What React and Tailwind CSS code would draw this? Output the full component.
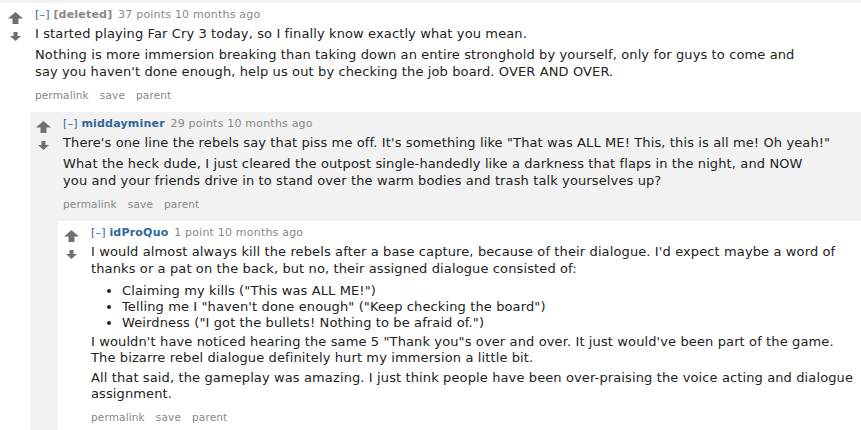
import React from "react";

const font = { fontFamily: '"DejaVu Sans", Verdana, sans-serif' };

function Arrows() {
  return (
    <div className="flex w-[24px] shrink-0 flex-col items-center pt-[9px]">
      <svg width="15" height="12" viewBox="0 0 15 12">
        <polygon points="7.5,0 15,6.5 10.5,6.5 10.5,12 4.5,12 4.5,6.5 0,6.5" fill="#707070" />
      </svg>
      <svg className="mt-[8px]" width="11" height="9" viewBox="0 0 11 9">
        <polygon points="3.5,0 7.5,0 7.5,4 11,4 5.5,9 0,4 3.5,4" fill="#707070" />
      </svg>
    </div>
  );
}

function Tagline({ author, deleted, points }) {
  return (
    <div className="whitespace-nowrap text-[11px] leading-[14px] tracking-[0.2px] text-[#888]">
      <span className="text-[#369]">[–]</span>{" "}
      {deleted ? (
        <span className="font-bold text-[#888]">[deleted]</span>
      ) : (
        <span className="font-bold text-[#369]">{author}</span>
      )}{" "}
      <span className="ml-[2px]">{points} 10 months ago</span>
    </div>
  );
}

function Buttons() {
  return (
    <div className="flex gap-[11px] whitespace-nowrap text-[10.5px] leading-[14px] tracking-[0.15px] text-[#888]">
      <span>permalink</span>
      <span>save</span>
      <span>parent</span>
    </div>
  );
}

function Comment({ author, deleted, points, children, body, bg }) {
  return (
    <div className={bg}>
      <div className="flex pl-[1px]">
        <Arrows />
        <div className="ml-[8px] flex-1 pt-[5px]">
          <Tagline author={author} deleted={deleted} points={points} />
          <div className="mt-[3px] whitespace-nowrap text-[13px] leading-[17px] tracking-[0.12px] text-[#222] [&_p]:mb-[4px] [&_p:last-child]:mb-0">
            {body}
          </div>
          <div className="mt-[8px] mb-[10px]">
            <Buttons />
          </div>
        </div>
      </div>
      {children}
    </div>
  );
}

export default function App() {
  return (
    <div className="min-h-[430px] bg-[#f2f2f2] pt-[3px]" style={font}>
      <div className="min-h-[427px] bg-white pl-[2px]">
        <Comment
          deleted
          points="37 points"
          bg="bg-white"
          body={
            <>
              <p>I started playing Far Cry 3 today, so I finally know exactly what you mean.</p>
              <p>
                Nothing is more immersion breaking than taking down an entire stronghold by yourself, only for guys to come and
                <br />
                say you haven't done enough, help us out by checking the job board. OVER AND OVER.
              </p>
            </>
          }
        >
          <div className="ml-[28px]">
            <Comment
              author="middayminer"
              points="29 points"
              bg="bg-[#f2f2f2]"
              body={
                <>
                  <p>
                    There's one line the rebels say that piss me off. It's something like "That was ALL ME! This, this is all me! Oh yeah!"
                  </p>
                  <p>
                    What the heck dude, I just cleared the outpost single-handedly like a darkness that flaps in the night, and NOW
                    <br />
                    you and your friends drive in to stand over the warm bodies and trash talk yourselves up?
                  </p>
                </>
              }
            >
              <div className="ml-[28px]">
                <Comment
                  author="idProQuo"
                  points="1 point"
                  bg="bg-white"
                  body={
                    <>
                      <p>
                        I would almost always kill the rebels after a base capture, because of their dialogue. I'd expect maybe a word of
                        <br />
                        thanks or a pat on the back, but no, their assigned dialogue consisted of:
                      </p>
                      <ul className="mt-[6px] mb-[3px] list-disc pl-[31px] leading-[16px]">
                        <li>Claiming my kills ("This was ALL ME!")</li>
                        <li>Telling me I "haven't done enough" ("Keep checking the board")</li>
                        <li>Weirdness ("I got the bullets! Nothing to be afraid of.")</li>
                      </ul>
                      <p className="leading-[16px]">
                        I wouldn't have noticed hearing the same 5 "Thank you"s over and over. It just would've been part of the game.
                        <br />
                        The bizarre rebel dialogue definitely hurt my immersion a little bit.
                      </p>
                      <p className="leading-[16px]">
                        All that said, the gameplay was amazing. I just think people have been over-praising the voice acting and dialogue
                        <br />
                        assignment.
                      </p>
                    </>
                  }
                />
              </div>
            </Comment>
          </div>
        </Comment>
      </div>
    </div>
  );
}
